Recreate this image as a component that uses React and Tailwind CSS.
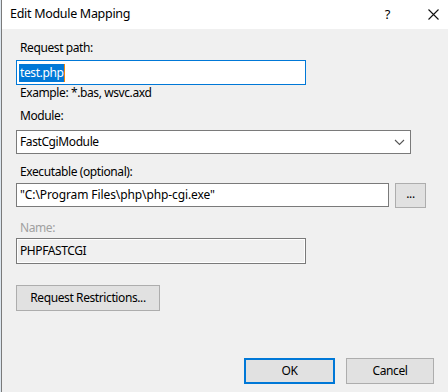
export default function App() {
  const font = { fontFamily: '"Noto Sans", "Open Sans", sans-serif' };

  return (
    <div className="w-[448px] h-[392px] flex bg-[#f0f0f0] text-[12px] tracking-[-0.4px] text-black overflow-hidden" style={font}>
      {/* window edge */}
      <div className="w-px bg-[#dce6ef]" />
      <div className="w-px bg-[#7a7a7a]" />
      <div className="flex-1 flex flex-col">
        {/* title bar */}
        <div className="h-[29px] shrink-0 bg-white flex items-center pl-[8px]">
          <span className="text-[12.5px] tracking-[-0.3px] leading-none">Edit Module Mapping</span>
          <span className="ml-auto text-[13px] leading-none mr-[38px]">?</span>
          <svg width="11" height="11" viewBox="0 0 11 11" className="mr-[9px]">
            <path d="M0.5 0.5 L10.5 10.5 M10.5 0.5 L0.5 10.5" stroke="#111" strokeWidth="1.1" fill="none" />
          </svg>
        </div>

        <div className="flex flex-col pl-[14px] pt-[11px]">
          <div className="leading-[16px] pl-[4px]">Request path:</div>
          <div className="mt-[4px] w-[290px] h-[25px] border border-[#0078d7] bg-white flex items-center pl-[2px]">
            <span className="bg-[#0078d7] text-white leading-[18px] pl-[1px] pr-[1px] border-r border-[#f0840c]">test.php</span>
          </div>
          <div className="leading-[16px] pl-[4px]">Example: *.bas, wsvc.axd</div>

          <div className="mt-[7px] leading-[16px] pl-[4px]">Module:</div>
          <div className="mt-[6px] w-[395px] h-[24px] border border-[#7a7a7a] bg-white flex items-center pl-[3px]">
            <span>FastCgiModule</span>
            <svg width="11" height="7" viewBox="0 0 11 7" className="ml-auto mr-[5px]">
              <path d="M1 1 L5.5 5.5 L10 1" stroke="#555" strokeWidth="1.1" fill="none" />
            </svg>
          </div>

          <div className="mt-[10px] leading-[16px] pl-[4px]">Executable (optional):</div>
          <div className="mt-[3px] flex items-start gap-[6px]">
            <div className="w-[373px] h-[24px] border border-[#7a7a7a] bg-white flex items-center pl-[3px]">
              <span className="tracking-[-0.1px]">"C:\Program Files\php\php-cgi.exe"</span>
            </div>
            <button className="w-[31px] h-[25px] border border-[#adadad] bg-[#e1e1e1] flex items-center justify-center leading-none pb-[3px]">
              ...
            </button>
          </div>

          <div className="mt-[12px] leading-[16px] pl-[4px] text-[#a0a0a0]">Name:</div>
          <div className="mt-[2px] w-[290px] h-[26px] border border-[#7a7a7a] flex items-center">
            <div className="w-full h-full border border-white flex items-center pl-[2px]">
              <span>PHPFASTCGI</span>
            </div>
          </div>

          <button className="mt-[21px] w-[144px] h-[26px] border border-[#adadad] bg-[#e1e1e1] flex items-center justify-center">
            Request Restrictions...
          </button>

          <div className="mt-[47px] flex gap-[11px] pl-[228px]">
            <button className="w-[91px] h-[26px] border-2 border-[#0078d7] bg-[#e1e1e1] flex items-center justify-center">
              OK
            </button>
            <button className="w-[88px] h-[26px] border border-[#adadad] bg-[#e1e1e1] flex items-center justify-center">
              Cancel
            </button>
          </div>
        </div>
      </div>
    </div>
  );
}
